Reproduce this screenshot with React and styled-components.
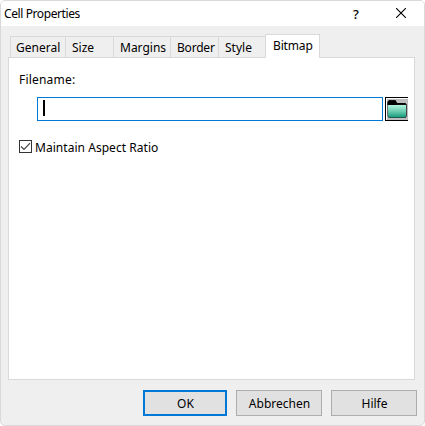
import React from "react";

import styled, { createGlobalStyle } from "styled-components";

const GlobalStyle = createGlobalStyle`
  * {
    box-sizing: border-box;
  }
  body {
    margin: 0;
    background: #fff;
    overflow: hidden;
  }
`;

const DialogWrapper = styled.div`
  display: flex;
  flex-direction: column;
  width: 425px;
  height: 426px;
  border: 1px solid #d9d9d9;
  border-radius: 5px;
  background: #efefef;
  overflow: hidden;
  color: #000;
  font-family: "Noto Sans", sans-serif;
  font-size: 12px;
  line-height: 16px;
  white-space: nowrap;
`;

const TitleBar = styled.div`
  display: flex;
  height: 25px;
  padding-left: 3px;
  background: #fff;
`;

const Title = styled.div`
  flex: 1;
  padding-top: 5px;
  letter-spacing: -0.4px;
`;

const TitleButton = styled.div`
  display: flex;
  justify-content: center;
  width: ${(props) => props.$width};
  padding-top: ${(props) => props.$top};
  font-size: 13px;
  font-weight: 500;
`;

const TabStrip = styled.div`
  display: flex;
  align-items: flex-end;
  height: 31px;
  padding-left: 9px;
`;

const Tab = styled.div`
  width: ${(props) => props.$width};
  height: 21px;
  padding: 3px 0 0 ${(props) => props.$indent || "6px"};
  border: 1px solid #d9d9d9;
  border-width: 1px 0 0 1px;
  letter-spacing: ${(props) => props.$spacing || "0"};
`;

const ActiveTab = styled(Tab)`
  height: 24px;
  margin-bottom: -1px;
  border-width: 1px 1px 0 1px;
  background: #fff;
  z-index: 1;
`;

const TabPage = styled.div`
  width: 407px;
  height: 323px;
  margin-left: 7px;
  padding: 14px 0 0 10px;
  border: 1px solid #d9d9d9;
  background: #fff;
`;

const FieldLabel = styled.div`
  letter-spacing: 0.2px;
`;

const FieldRow = styled.div`
  display: flex;
  align-items: center;
  height: 24px;
  margin: 9px 0 0 18px;
`;

const Input = styled.div`
  width: 346px;
  height: 24px;
  padding: 2px 0 0 5px;
  border: 1px solid #0078d7;
`;

const Caret = styled.div`
  width: 2px;
  height: 16px;
  background: #000;
`;

const BrowseButton = styled.div`
  width: 23px;
  height: 24px;
  margin-left: 2px;

  svg {
    display: block;
  }
`;

const CheckRow = styled.div`
  display: flex;
  align-items: flex-start;
  gap: 3px;
  margin-top: 19px;
`;

const CheckBox = styled.div`
  width: 13px;
  height: 13px;
  border: 1px solid #333;

  svg {
    display: block;
  }
`;

const CheckLabel = styled.div`
  letter-spacing: 0.04px;
`;

const ButtonRow = styled.div`
  display: flex;
  gap: 9px;
  margin: 10px 0 0 142px;
`;

const Button = styled.div`
  display: flex;
  align-items: center;
  justify-content: center;
  width: ${(props) => props.$width};
  height: 26px;
  padding: 2px 0 0 1px;
  border: ${(props) => (props.$primary ? "2px solid #0078d7" : "1px solid #adadad")};
  background: #e1e1e1;
`;

function FolderIcon() {
  return (
    <svg width="23" height="24" viewBox="0 0 23 24">
      <defs>
        <linearGradient id="folder" x1="0" y1="0" x2="0" y2="1">
          <stop offset="0" stopColor="#b2f5df" />
          <stop offset="0.5" stopColor="#6bcdb0" />
          <stop offset="1" stopColor="#14997a" />
        </linearGradient>
      </defs>
      <rect width="23" height="24" fill="#000" />
      <rect x="1" y="1" width="22" height="22" fill="#fff" />
      <rect x="2" y="2" width="21" height="21" fill="#bdbdbd" />
      <path d="M2.5 8V5L4 3.2h6.5L12 6h8l1.8 1.5V19L20.5 21H4l-1.5-2z" fill="#222" />
      <path d="M3 8h18v11l-1 1.5H4L3 19z" fill="url(#folder)" />
      <path d="M2.5 8V5L4 3.2h6.5L12 6h8l1.8 1.5H12L10 8z" fill="#000" />
    </svg>
  );
}

function App() {
  return (
    <>
      <GlobalStyle />
      <DialogWrapper>
        <TitleBar>
          <Title>Cell Properties</Title>
          <TitleButton $width="44px" $top="5px">
            ?
          </TitleButton>
          <TitleButton $width="46px" $top="7px">
            <svg width="10" height="10" viewBox="0 0 10 10">
              <path d="M0 0L10 10M10 0L0 10" stroke="#000" strokeWidth="1.1" />
            </svg>
          </TitleButton>
        </TitleBar>
        <TabStrip>
          <Tab $width="55px" $indent="5px">
            General
          </Tab>
          <Tab $width="48px">Size</Tab>
          <Tab $width="57px">Margins</Tab>
          <Tab $width="48px" $spacing="-0.2px">
            Border
          </Tab>
          <Tab $width="47px">Style</Tab>
          <ActiveTab $width="55px" $indent="7px" $spacing="-0.15px">
            Bitmap
          </ActiveTab>
        </TabStrip>
        <TabPage>
          <FieldLabel>Filename:</FieldLabel>
          <FieldRow>
            <Input>
              <Caret />
            </Input>
            <BrowseButton>
              <FolderIcon />
            </BrowseButton>
          </FieldRow>
          <CheckRow>
            <CheckBox>
              <svg width="11" height="11" viewBox="0 0 11 11">
                <path d="M1 5.5L4 8.5L10 2.2" fill="none" stroke="#444" strokeWidth="1.2" />
              </svg>
            </CheckBox>
            <CheckLabel>Maintain Aspect Ratio</CheckLabel>
          </CheckRow>
        </TabPage>
        <ButtonRow>
          <Button $width="84px" $primary>
            OK
          </Button>
          <Button $width="86px">Abbrechen</Button>
          <Button $width="86px">Hilfe</Button>
        </ButtonRow>
      </DialogWrapper>
    </>
  );
}

export default App;
